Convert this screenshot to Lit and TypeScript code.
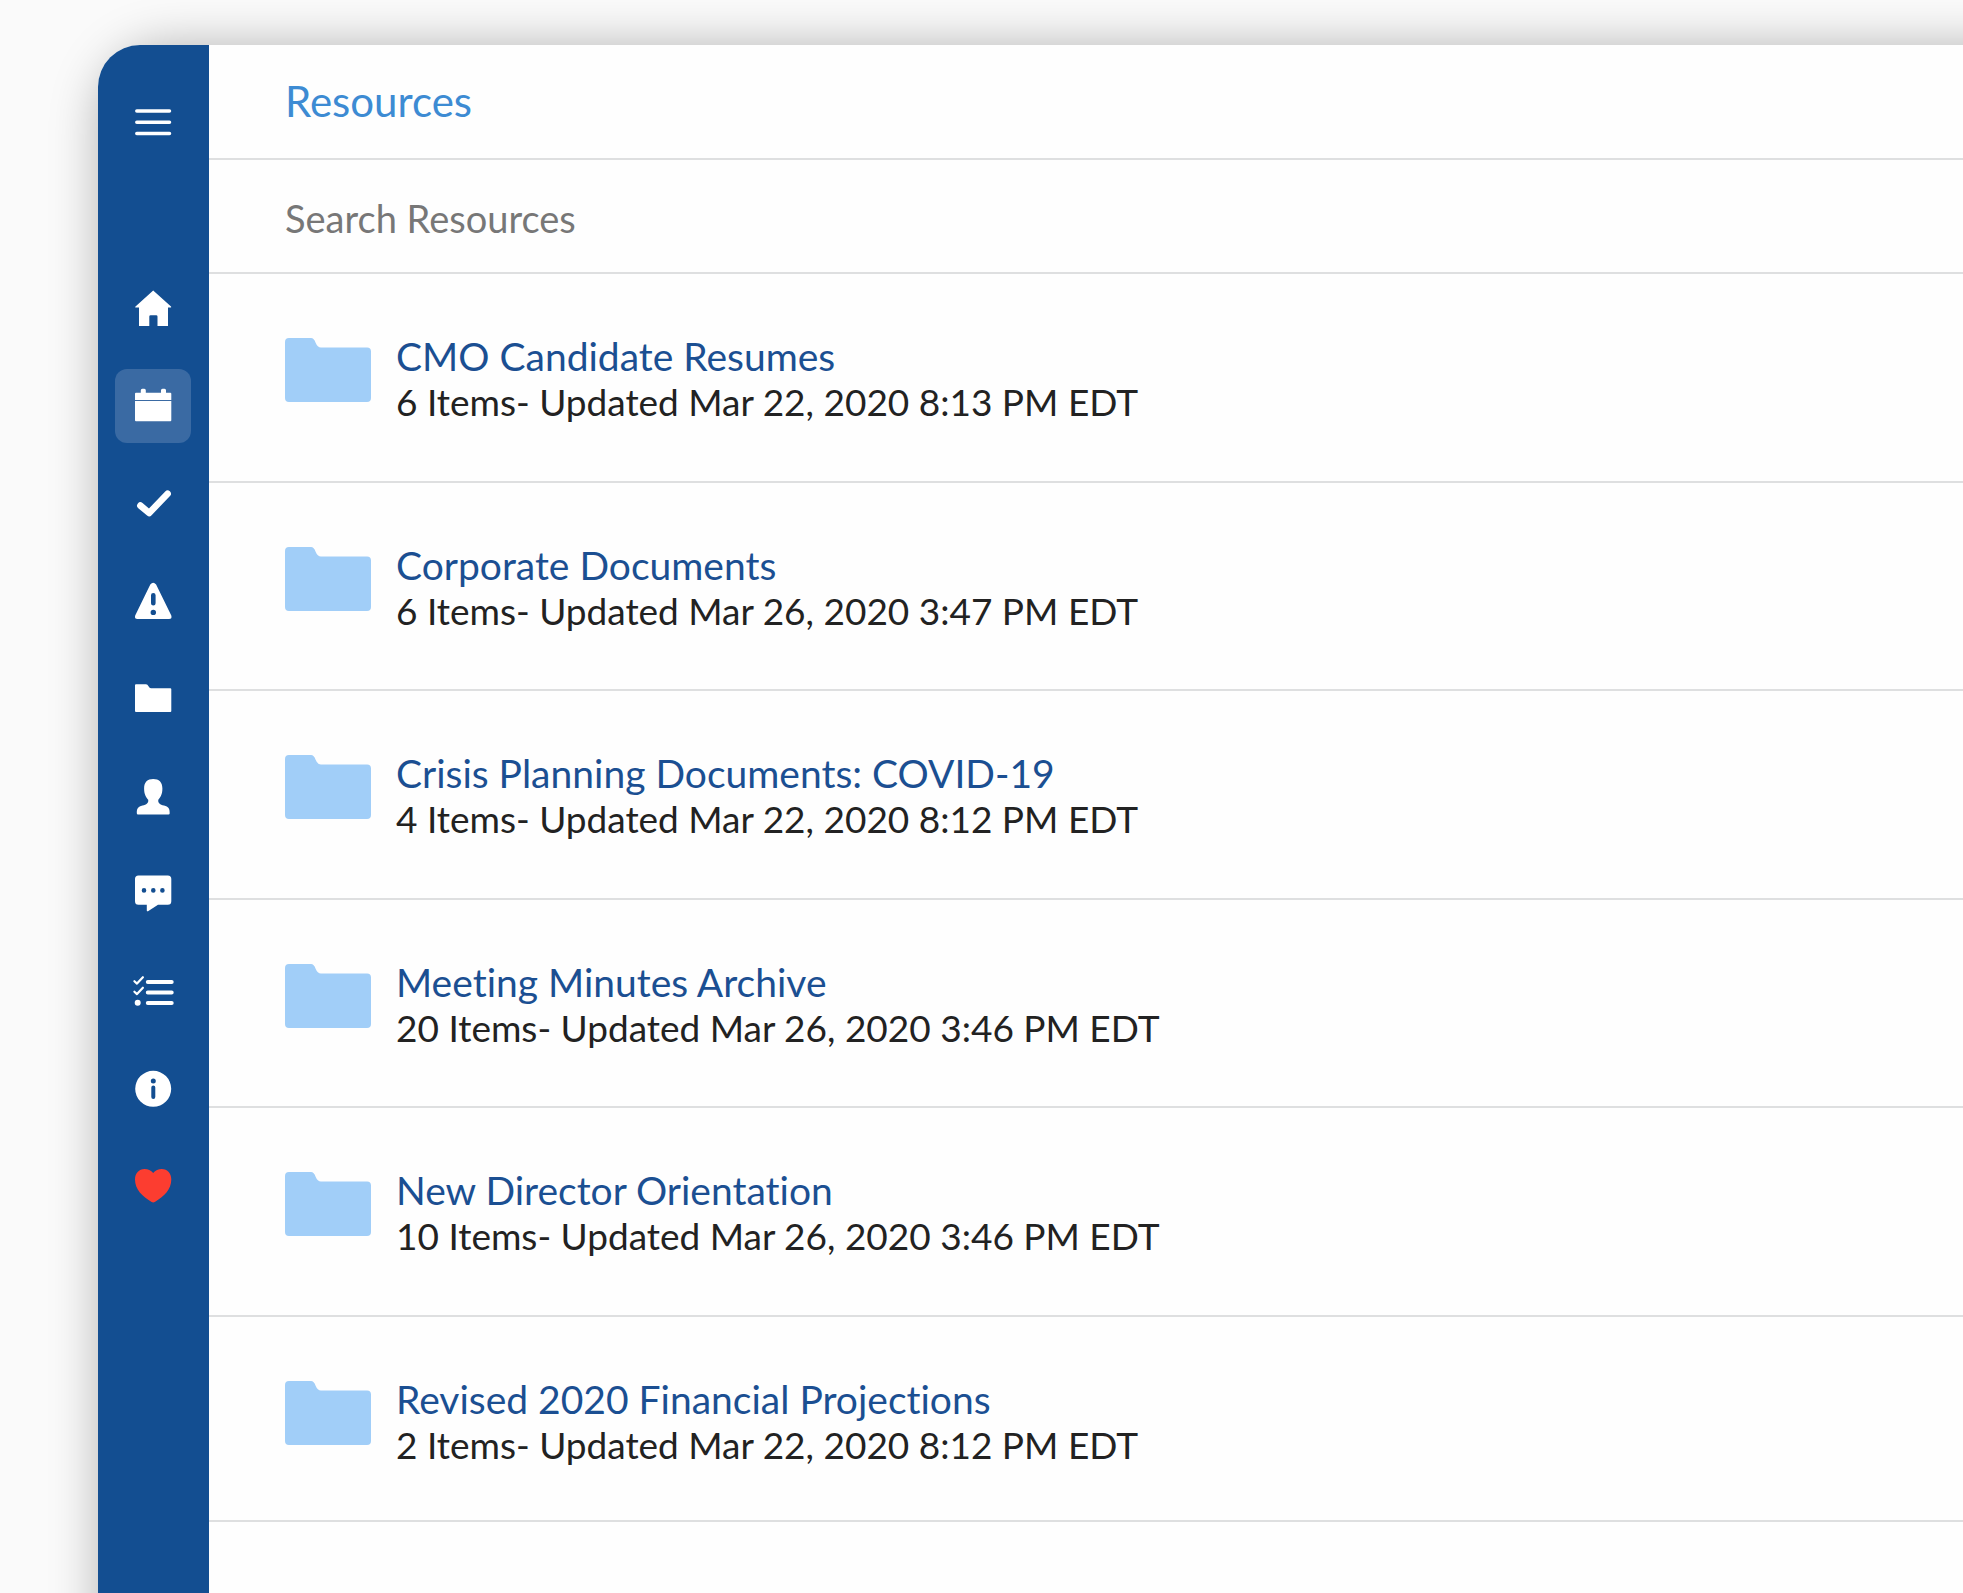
import { LitElement, html, svg, css, type SVGTemplateResult } from "lit";
import { customElement, property } from "lit/decorators.js";
import { classMap } from "lit/directives/class-map.js";

interface NavEntry {
  label: string;
  icon: SVGTemplateResult;
  active?: boolean;
  favorite?: boolean;
}

interface Folder {
  name: string;
  items: number;
  updated: string;
}

const NAV: NavEntry[] = [
  {
    label: "Home",
    icon: svg`<path d="M20.2 1.6 38 17.4c.5.6.2 1.2-.5 1.2H35V37H24.5V27.5q0-1.3-1.3-1.3h-5.6q-1.3 0-1.3 1.3V37H6V18.600H3c-.8 0-1.100-.6-.5-1.200z"/>`,
  },
  {
    label: "Calendar",
    active: true,
    icon: svg`<path d="M3 6.700H7.800V4.200q0-1.500 1.500-1.500h2q1.500 0 1.500 1.500v2.500H28V4.200q0-1.500 1.500-1.500h2Q33 2.700 33 4.200v2.500h4.300q1 0 1 1V13.900H2V7.700q0-1 1-1zM2 14.900H38.300V34.300q0 1-1 1H3q-1 0-1-1z"/>`,
  },
  {
    label: "Approvals",
    icon: svg`<path class="line" stroke-width="6.600" d="M7.400 21.600 16.200 29 34.600 9.700"/>`,
  },
  {
    label: "Alerts",
    icon: svg`<path fill-rule="evenodd" d="M17.300 3.500q2.900-3.500 5.800 0L38.300 34.500Q39.300 38 36 38H4.500Q1.200 38 2.200 34.500zM18 14.300V22.300a2.300 2.300 0 0 0 4.600 0V14.300a2.300 2.300 0 0 0-4.600 0zM17.600 31.400a2.700 2.700 0 1 0 5.400 0 2.700 2.700 0 1 0-5.400 0z"/>`,
  },
  {
    label: "Resources",
    icon: svg`<path d="M3 6.300H13Q14.600 6.300 15.500 8.200 16.500 10.300 18 10.300H37.300q1 0 1 1V33q0 1-1 1H3q-1 0-1-1V7.300q0-1 1-1z"/>`,
  },
  {
    label: "People",
    icon: svg`<path d="M20.200 3C26 3 29.400 6 29.400 12.500 29.400 19 27 21.500 25.300 23.800 24.800 27.300 27 28.600 31 29.600 35.500 30.700 36.700 32.500 36.700 37.200Q36.700 38.600 35.500 38.600H5Q3.800 38.600 3.800 37.200C3.800 32.500 5 30.700 9.500 29.600 13.500 28.600 15.700 27.300 15.200 23.800 13.500 21.500 11.100 19 11.100 12.500 11.100 6 14.500 3 20.200 3z"/>`,
  },
  {
    label: "Messages",
    icon: svg`<path fill-rule="evenodd" d="M5.500 2.400H34.800q3.500 0 3.500 3.500V28.200q0 3.500-3.500 3.500H25L15 38.200q-1.200.5-1.200-.7V31.700H5.500Q2 31.700 2 28.200V5.900Q2 2.400 5.500 2.400zM8.700 17.400a2.300 2.300 0 1 0 4.600 0 2.300 2.300 0 1 0-4.600 0zM18 17.400a2.300 2.300 0 1 0 4.600 0 2.300 2.300 0 1 0-4.600 0zM27.100 17.400a2.300 2.300 0 1 0 4.600 0 2.300 2.300 0 1 0-4.600 0z"/>`,
  },
  {
    label: "Tasks",
    icon: svg`<path class="line" stroke-width="4" d="M14.800 12H38.700M14.800 22.400H38.700M14.800 33H38.700"/><path class="line" stroke-width="2.200" d="M1.400 11.200 4 13.600 9.900 7.200M1.400 21.700 4 24.100 9.900 17.700"/><circle cx="4.700" cy="32.800" r="3"/>`,
  },
  {
    label: "Information",
    icon: svg`<path fill-rule="evenodd" d="M2.200 20.800a18 18 0 1 0 36 0 18 18 0 1 0-36 0zM17.800 12.900a2.500 2.500 0 1 0 5 0 2.500 2.500 0 1 0-5 0zM18.300 19.600V28.900a2 2 0 0 0 4 0V19.600a2 2 0 0 0-4 0z"/>`,
  },
  {
    label: "Favorites",
    favorite: true,
    icon: svg`<path d="M20.200 8C22.400 5.200 25.500 4 28.800 4 34.500 4 38.300 8.500 38.300 14.500 38.300 24.500 31 31.500 21.800 37Q20.200 37.900 18.600 37C9.400 31.500 2 24.500 2 14.500 2 8.500 5.900 4 11.600 4 14.900 4 18 5.200 20.200 8z"/>`,
  },
];

const FOLDERS: Folder[] = [
  { name: "CMO Candidate Resumes", items: 6, updated: "Mar 22, 2020 8:13 PM EDT" },
  { name: "Corporate Documents", items: 6, updated: "Mar 26, 2020 3:47 PM EDT" },
  { name: "Crisis Planning Documents: COVID-19", items: 4, updated: "Mar 22, 2020 8:12 PM EDT" },
  { name: "Meeting Minutes Archive", items: 20, updated: "Mar 26, 2020 3:46 PM EDT" },
  { name: "New Director Orientation", items: 10, updated: "Mar 26, 2020 3:46 PM EDT" },
  { name: "Revised 2020 Financial Projections", items: 2, updated: "Mar 22, 2020 8:12 PM EDT" },
];

@customElement("side-bar")
export class SideBar extends LitElement {
  static styles = css`
    :host {
      display: flex;
      flex-direction: column;
      align-items: center;
      box-sizing: border-box;
      width: 111px;
      padding: 40px 1px 0 0;
      background: #134e91;
    }
    button {
      display: flex;
      align-items: center;
      justify-content: center;
      width: 76px;
      height: 74px;
      padding: 0;
      border: 0;
      border-radius: 12px;
      background: none;
      color: #fff;
      cursor: pointer;
    }
    button.active {
      background: #3a6aa3;
    }
    button.favorite {
      color: #fc3d30;
    }
    .menu {
      margin-bottom: 113px;
    }
    nav {
      display: flex;
      flex-direction: column;
      justify-content: space-between;
      height: 950px;
    }
    svg {
      width: 40px;
      height: 40px;
      fill: currentColor;
      overflow: visible;
    }
    .line {
      fill: none;
      stroke: currentColor;
      stroke-linecap: round;
      stroke-linejoin: round;
    }
  `;

  render() {
    return html`
      <button class="menu" aria-label="Menu">
        <svg viewBox="0 0 40 40" aria-hidden="true">
          <path class="line" stroke-width="3.500" d="M3.800 9H36.500M3.800 20.300H36.500M3.800 31.500H36.500" />
        </svg>
      </button>
      <nav aria-label="Main">
        ${NAV.map(
          (entry) => html`
            <button
              class=${classMap({ active: !!entry.active, favorite: !!entry.favorite })}
              aria-label=${entry.label}
            >
              <svg viewBox="0 0 40 40" aria-hidden="true">${entry.icon}</svg>
            </button>
          `
        )}
      </nav>
    `;
  }
}

@customElement("folder-row")
export class FolderRow extends LitElement {
  static styles = css`
    :host {
      display: block;
    }
    .row {
      display: flex;
      align-items: flex-start;
      gap: 25px;
      padding: 59px 76px 56px;
      border-bottom: 2px solid #dedfe0;
      color: #222;
      font-size: 37px;
      line-height: 46px;
      text-decoration: none;
    }
    :host(:nth-of-type(even)) .row {
      padding-bottom: 55px;
    }
    :host(:last-of-type) .row {
      padding-bottom: 52px;
    }
    .folder {
      flex: none;
      width: 86px;
      height: 64px;
      margin-top: 5px;
      fill: #a1cef8;
    }
    .text {
      display: flex;
      flex-direction: column;
    }
    .name {
      color: #1b4f92;
      font-size: 39px;
    }
  `;

  @property({ attribute: false }) folder!: Folder;

  render() {
    const { name, items, updated } = this.folder;
    return html`
      <a class="row" href="#">
        <svg class="folder" viewBox="0 0 86 64" aria-hidden="true">
          <path
            d="M4 0H26Q29 0 30.500 4.500 32.500 9.600 36 9.600H82Q86 9.600 86 13.600V60Q86 64 82 64H4Q0 64 0 60V4Q0 0 4 0z"
          />
        </svg>
        <span class="text">
          <span class="name">${name}</span>
          <span>${items} Items- Updated ${updated}</span>
        </span>
      </a>
    `;
  }
}

@customElement("app-root")
export class AppRoot extends LitElement {
  static styles = css`
    :host {
      display: block;
      box-sizing: border-box;
      min-height: 100vh;
      padding: 45px 0 0 98px;
      overflow: hidden;
      background: #fafafa;
      font-family: Lato, "Liberation Sans", sans-serif;
      font-variant-ligatures: none;
    }
    .window {
      display: flex;
      min-height: calc(100vh - 45px);
      border-top-left-radius: 42px;
      background: #fefefe;
      box-shadow: 30px 30px 48px 30px rgba(0, 0, 0, 0.28);
    }
    side-bar {
      flex: none;
      border-top-left-radius: 42px;
    }
    main {
      flex: 1;
      min-width: 0;
    }
    h1 {
      margin: 0;
      padding: 32px 76px 33px;
      border-bottom: 2px solid #dedfe0;
      color: #3d8bd3;
      font-size: 42px;
      font-weight: 400;
      line-height: 48px;
    }
    .search {
      display: block;
      box-sizing: border-box;
      width: 100%;
      height: 114px;
      padding: 4px 76px 0;
      border: 0;
      border-bottom: 2px solid #dedfe0;
      border-radius: 0;
      outline: 0;
      background: none;
      color: #222;
      font-family: inherit;
      font-size: 38px;
    }
    .search::placeholder {
      color: #777;
      opacity: 1;
    }
  `;

  render() {
    return html`
      <div class="window">
        <side-bar></side-bar>
        <main>
          <h1>Resources</h1>
          <input class="search" type="text" aria-label="Search Resources" placeholder="Search Resources" />
          ${FOLDERS.map((folder) => html`<folder-row .folder=${folder}></folder-row>`)}
        </main>
      </div>
    `;
  }
}
